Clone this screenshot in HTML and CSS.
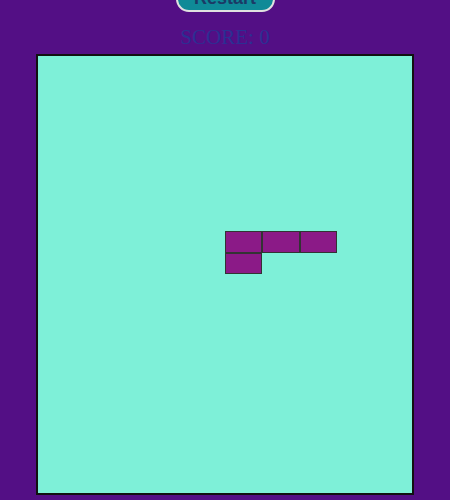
FILE: index.html
```html
<!DOCTYPE html>
<html>
<head>
<meta charset="utf-8">
<link rel="stylesheet" href="styles.css">
</head>
<body>
<div class="game">
  <button class="restart">Restart</button>
  <div class="score">SCORE: 0</div>
  <div class="board">
    <div class="cell" style="left:50%;top:40%"></div>
    <div class="cell" style="left:60%;top:40%"></div>
    <div class="cell" style="left:70%;top:40%"></div>
    <div class="cell" style="left:50%;top:45%"></div>
  </div>
</div>
</body>
</html>
```
FILE: styles.css
```css
html, body {
  margin: 0;
  padding: 0;
  background: #530f85;
  overflow: hidden;
}
.game {
  display: flex;
  flex-direction: column;
  align-items: center;
  font-family: "Liberation Serif", serif;
}
.restart {
  margin-top: -14px;
  width: 99px;
  height: 26px;
  padding: 0 0 5px;
  border: 2px solid #e0e0e0;
  border-radius: 14px;
  background: #0f8a97;
  color: #1b3a66;
  font-family: "Liberation Sans", sans-serif;
  font-weight: bold;
  font-size: 18px;
  line-height: 20px;
}
.score {
  margin-top: 13px;
  font-size: 21px;
  line-height: 24px;
  color: #2c2f93;
}
.board {
  position: relative;
  margin-top: 5px;
  width: 374px;
  height: 437px;
  background: #7ef0d8;
  border: 2px solid #111;
}
.cell {
  position: absolute;
  width: 10%;
  height: 5%;
  box-sizing: border-box;
  background: #8b1a87;
  border: 1px solid #333;
}
```
